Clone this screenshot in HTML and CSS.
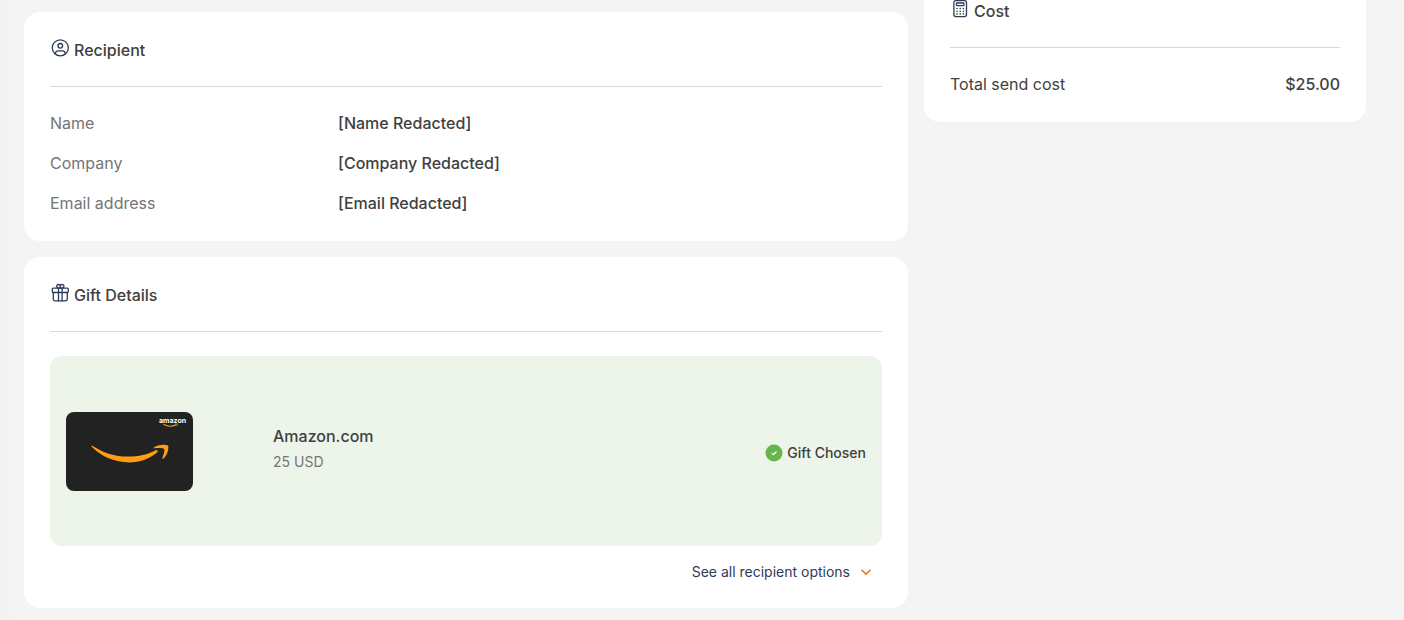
FILE: index.html
```html
<!DOCTYPE html>
<html lang="en">
<head>
    <meta charset="UTF-8">
    <meta name="viewport" content="width=device-width, initial-scale=1.0">
    <title>Gift Details</title>
    <link rel="stylesheet" href="styles.css">
</head>
<body>

    <main class="page">
        <div class="main-column">
            <section class="card">
                <h2 class="card-title">
                    <svg class="title-icon" viewBox="0 0 20 20" aria-hidden="true">
                        <circle cx="10.300" cy="9.800" r="8"/>
                        <circle cx="10.300" cy="7.800" r="2.300"/>
                        <path d="M5.200 15.700c.3-1.900 1.400-2.900 3.200-2.900h3.800c1.800 0 2.900 1 3.200 2.900"/>
                    </svg>
                    Recipient
                </h2>
                <dl class="details">
                    <dt>Name</dt>
                    <dd>[Name Redacted]</dd>
                    <dt>Company</dt>
                    <dd>[Company Redacted]</dd>
                    <dt>Email address</dt>
                    <dd>[Email Redacted]</dd>
                </dl>
            </section>

            <section class="card">
                <h2 class="card-title">
                    <svg class="title-icon" viewBox="0 0 20 20" aria-hidden="true">
                        <rect x="2.300" y="5.100" width="16" height="4.400" rx="1"/>
                        <path d="M3.300 9.500v6.600a1.700 1.700 0 0 0 1.700 1.700h10.600a1.700 1.700 0 0 0 1.700-1.700V9.500"/>
                        <path d="M8.500 5.100v12.700M12.100 5.100v12.700"/>
                        <path d="M10.300 5.100H8.500a1.800 1.800 0 1 1 1.800-1.800zM10.300 5.100h1.800a1.800 1.800 0 1 0-1.800-1.800z"/>
                    </svg>
                    Gift Details
                </h2>
                <div class="gift">
                    <svg class="gift-card" viewBox="0 0 127 79" role="img" aria-label="Amazon gift card">
                        <rect width="127" height="79" rx="8" fill="#222"/>
                        <g fill="#ff9e16" transform="translate(.7 -.8)">
                            <path d="M25.600 34.600C37 42 48 45.400 61 45.400c11 0 20-2 28-6.300 1.500-.8 2.800 1 1.400 2.200C82.500 48 73 51.200 62.500 51.200c-14.500 0-27.500-5.400-37.200-15.300-.8-.8-.4-1.700.3-1.300z"/>
                            <path d="M87.200 36.200c3-2.300 8.500-3.100 13.200-2.200 1 .2 1.300.9 1.300 1.900 0 4-1.700 8.800-4.700 11.300-.8.700-1.600.3-1.300-.6 1-2.700 2.600-7 1.800-8.500-.8-1.400-5.600-1.300-9.500-1-1.100.1-1.500-.4-.8-.9z"/>
                        </g>
                        <text class="brand" x="93" y="11">amazon</text>
                        <path d="M97.500 12.300c4.300 2.700 8.500 2.500 12.600.5" fill="none" stroke="#ff9e16" stroke-width="1.100"/>
                        <path d="M109.200 12l2.200-.1-.6 2.300" fill="none" stroke="#ff9e16" stroke-width=".7"/>
                    </svg>
                    <div class="gift-info">
                        <h3 class="gift-name">Amazon.com</h3>
                        <p class="gift-value">25 USD</p>
                    </div>
                    <p class="gift-status">
                        <svg class="status-icon" viewBox="0 0 18 18" aria-hidden="true">
                            <circle cx="9" cy="9" r="8.500"/>
                            <path d="M6.800 9.100l1.700 1.600 3-3.200"/>
                        </svg>
                        Gift Chosen
                    </p>
                </div>
                <button type="button" class="options-button">
                    See all recipient options
                    <svg class="chevron" viewBox="0 0 12 12" aria-hidden="true">
                        <path d="M1.500 3.800L6 8.100l4.500-4.300"/>
                    </svg>
                </button>
            </section>
        </div>

        <aside class="side-column">
            <section class="card">
                <h2 class="card-title">
                    <svg class="title-icon" viewBox="0 0 20 20" aria-hidden="true">
                        <rect x="3.900" y="1.600" width="12.600" height="16" rx="2"/>
                        <rect x="6.500" y="4" width="7.400" height="2.600" rx=".6"/>
                        <path class="keys" d="M7 9.500h.01M10.200 9.500h.01M13.400 9.500h.01M7 12.200h.01M10.200 12.200h.01M13.400 12.200h.01M7 14.900h.01M10.200 14.900h.01M13.400 14.900h.01"/>
                    </svg>
                    Cost
                </h2>
                <dl class="cost-row">
                    <dt>Total send cost</dt>
                    <dd>$25.00</dd>
                </dl>
            </section>
        </aside>
    </main>

</body>
</html>
```

FILE: styles.css
```css
* {
    box-sizing: border-box;
}
body {
    margin: 0;
    background: linear-gradient(to right, #f1f1f1, #f4f4f4 12px);
    color: #404040;
    font-family: Inter, "Liberation Sans", sans-serif;
    font-size: 16px;
    line-height: 24px;
}
h2, h3, p, dl, dd {
    margin: 0;
}
.page {
    display: grid;
    grid-template-columns: 2fr 1fr;
    align-items: start;
    gap: 16px;
    padding: 12px 38px 12px 24px;
}
.main-column {
    display: flex;
    flex-direction: column;
    gap: 16px;
}
/* the cost card starts higher than the main column */
.side-column {
    margin-top: -39px;
}
.card {
    padding: 26px;
    background-color: #fff;
    border-radius: 16px;
}
.card-title {
    display: flex;
    align-items: flex-start;
    gap: 4px;
    margin-bottom: 24px;
    padding-bottom: 24px;
    border-bottom: 1px solid #d8d8d8;
    font-size: 16px;
    font-weight: 500;
}
.title-icon {
    width: 20px;
    height: 20px;
    fill: none;
    stroke: #2f3b57;
    stroke-width: 1.3;
    stroke-linecap: round;
}
.keys {
    stroke-width: 1.6;
}
.details {
    display: grid;
    grid-template-columns: 288px 1fr;
    row-gap: 16px;
}
.details dt {
    color: #757575;
}
.details dd, .cost-row dd {
    font-weight: 500;
}
.cost-row {
    display: flex;
    justify-content: space-between;
}
.gift {
    display: flex;
    align-items: center;
    min-height: 190px;
    padding: 16px;
    background-color: #edf5ea;
    border-radius: 12px;
}
.gift-card {
    width: 127px;
    height: 79px;
    margin-right: 80px;
}
.brand {
    fill: #fff;
    font-size: 7px;
    font-weight: 700;
}
.gift-info {
    flex: 1;
    padding-bottom: 4px;
}
.gift-name {
    font-size: 16px;
    font-weight: 500;
}
.gift-value {
    margin-top: 2px;
    color: #757575;
    font-size: 14px;
}
.gift-status {
    display: flex;
    align-items: center;
    gap: 4px;
    padding-top: 4px;
    font-size: 14px;
    font-weight: 500;
}
.status-icon {
    width: 18px;
    height: 18px;
    fill: #66b64f;
}
.status-icon path {
    fill: none;
    stroke: #fff;
    stroke-width: 1.2;
}
.options-button {
    display: flex;
    align-items: center;
    gap: 10px;
    margin: 16px 0 0 auto;
    padding: 0 10px;
    border: none;
    background: none;
    color: #2f3b57;
    font-family: inherit;
    font-size: 14px;
    line-height: 20px;
    cursor: pointer;
}
.chevron {
    width: 12px;
    height: 12px;
    fill: none;
    stroke: #f26b21;
    stroke-width: 1.5;
}
@media (max-width: 768px) {
    .page {
        grid-template-columns: 1fr;
        padding: 12px;
    }
    .side-column {
        margin-top: 0;
    }
    .details {
        grid-template-columns: 1fr 1fr;
    }
}
```
